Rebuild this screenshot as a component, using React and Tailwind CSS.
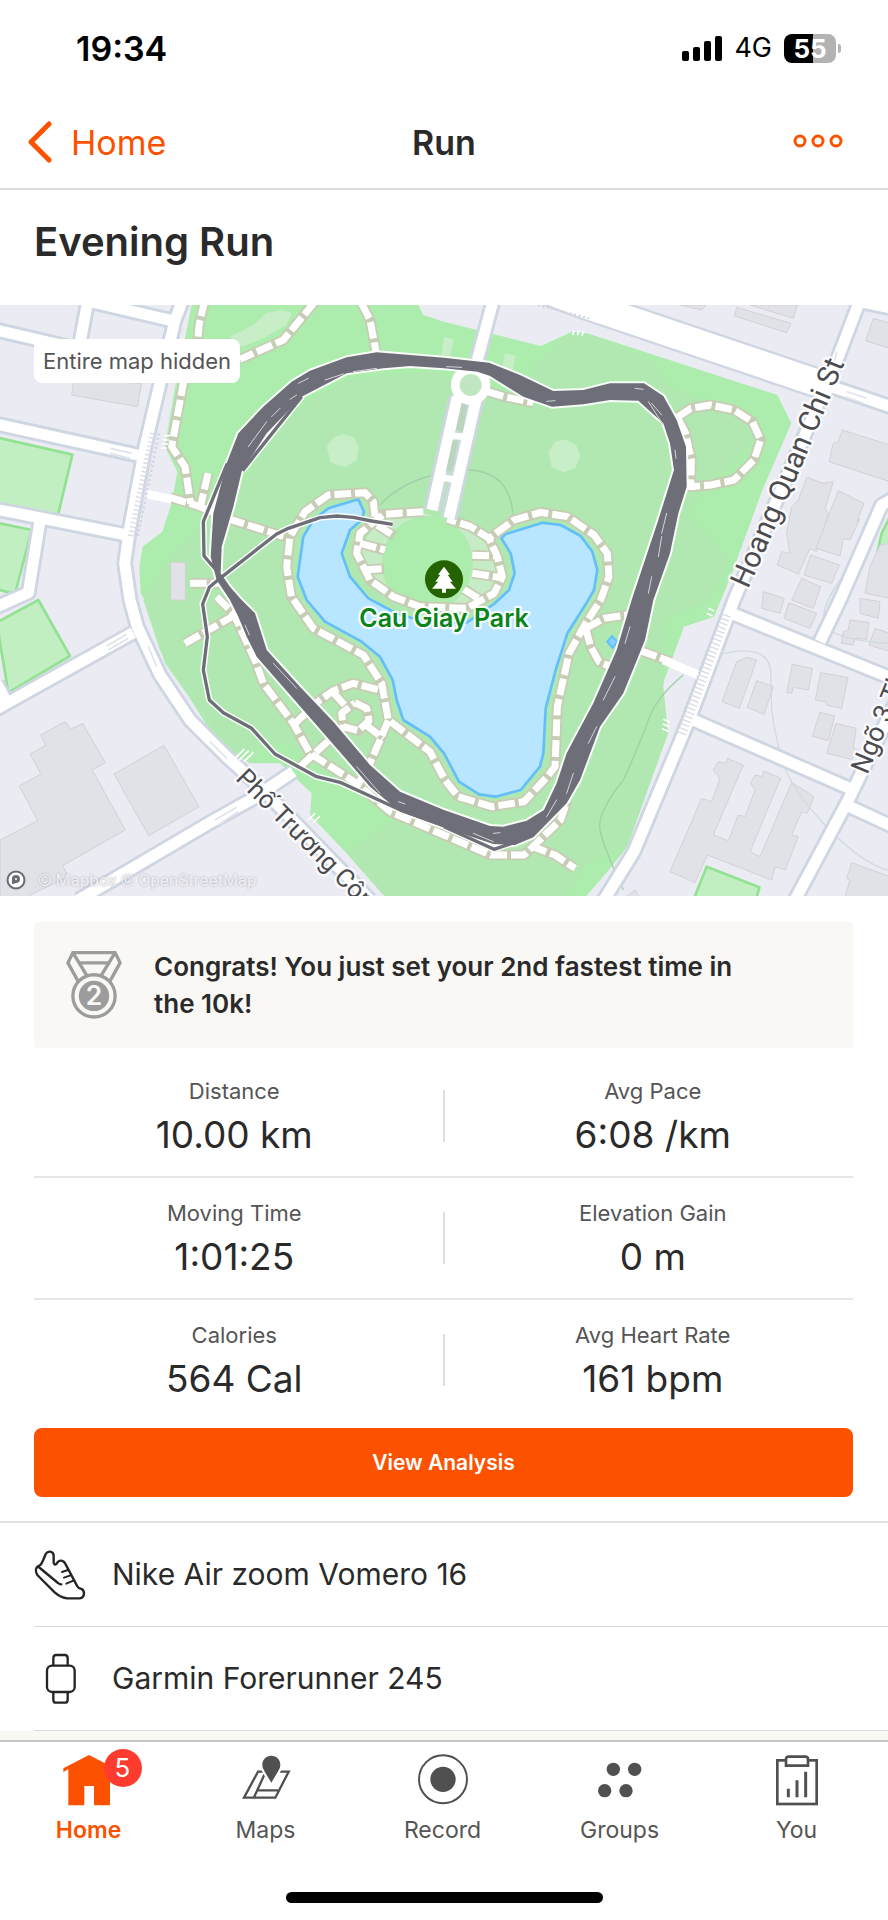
import React from 'react';

const stats = [
  [
    { label: 'Distance', value: '10.00 km' },
    { label: 'Avg Pace', value: '6:08 /km' },
  ],
  [
    { label: 'Moving Time', value: '1:01:25' },
    { label: 'Elevation Gain', value: '0 m' },
  ],
  [
    { label: 'Calories', value: '564 Cal' },
    { label: 'Avg Heart Rate', value: '161 bpm' },
  ],
];

/* ---------- map data (map units, 3 per px) ---------- */

const PARK =
  'M575 15 L520 290 L495 440 L532 515 L515 610 L487 695 L428 740 L418 800 L422 880 L440 910 L465 1000 L495 1090 L560 1180 L620 1275 L700 1360 L750 1390 L840 1390 L935 1480 L930 1545 L1040 1660 L1155 1790 L1757 1790 L1822 1715 L1882 1640 L2004 1300 L1987 1155 L2052 980 L2142 950 L2192 830 L2287 570 L2374 370 L2332 285 L1762 100 L1717 95 L1622 138 L1332 65 L1270 45 L1255 15 Z';

const PARK_INNER =
  'M720 560 L860 350 L1030 240 L1300 215 L1590 330 L1600 200 L1720 98 L1770 105 L1960 180 L2010 260 L2200 340 L2280 400 L2180 500 L2060 640 L2190 780 L2130 900 L2000 960 L1990 1160 L2004 1300 L1880 1640 L1760 1690 L1700 1790 L1155 1790 L1040 1660 L1180 1560 L860 1330 L700 1360 L560 1180 L480 1050 L430 900 L520 760 Z';

const LAKE =
  'M985 625 L1075 598 L1092 635 L1085 660 L1050 690 L1025 760 L1050 830 L1105 895 L1190 940 L1280 968 L1400 968 L1482 912 L1527 870 L1544 820 L1532 760 L1504 715 L1517 702 L1627 668 L1682 675 L1742 708 L1777 755 L1792 810 L1782 870 L1762 905 L1702 1000 L1667 1110 L1637 1225 L1630 1360 L1620 1400 L1562 1470 L1487 1490 L1437 1483 L1377 1445 L1332 1360 L1290 1310 L1210 1260 L1190 1200 L1178 1140 L1140 1070 L1085 1025 L975 965 L920 900 L893 830 L910 710 L940 660 Z';

const roads = [
  'M548 0 L525 60 L435 440 L388 690 L374 790 L390 900 L412 980 L480 1125 L570 1260 L680 1370 L790 1470 L1110 1800',
  'M-20 88 L480 205',
  'M250 0 L515 62',
  'M262 10 L238 140',
  'M-20 370 L425 468',
  'M-20 626 L395 708',
  'M120 662 L85 878 L-20 925',
  'M400 998 L-20 1232',
  'M-10 1150 L22 1210',
  'M880 1415 L760 1495 L640 1562 L235 1800',
  'M2580 0 L2515 170 L2202 900 L2067 1260 L1902 1655 L1812 1800',
  'M2202 943 L2700 1145',
  'M2460 1025 L2520 900 L2645 615 L2700 585',
  'M2075 1258 L2560 1470',
  'M2700 1180 L2545 1500 L2385 1800',
  'M2545 1518 L2700 1590',
  'M2480 255 L2700 330',
  'M1480 0 L1432 180',
  'M1372 290 L1296 630',
  'M1430 290 L1347 655',
  'M2580 5 L2700 30',
];

const paths = [
  'M615 0 L598 70 L592 130 L550 250 L515 440 L555 500 L572 612',
  'M945 5 L850 120 L720 178',
  'M1085 10 L1110 60 L1128 155',
  'M510 592 L600 620 L690 658 L860 712',
  'M624 520 L602 618',
  'M570 850 L660 850',
  'M1125 650 L1120 605 L1095 578 L985 585 L915 635 L870 710 L860 800 L874 890 L940 985 L1090 1065 L1145 1150 L1165 1260 L1290 1355 L1335 1440 L1375 1490 L1475 1520 L1572 1505 L1642 1430 L1665 1400 L1672 1220 L1707 1060 L1757 970 L1802 900 L1827 830 L1822 760 L1782 705 L1702 650 L1622 637 L1542 660 L1467 715 L1412 680 L1342 657',
  'M1270 635 L1150 643 L1080 700 L1070 760 L1110 840 L1180 890 L1260 920 L1400 925 L1482 880 L1507 830 L1492 770 L1467 715',
  'M1080 730 L1155 750',
  'M1095 810 L1152 806',
  'M1132 675 L1182 708',
  'M1417 766 L1482 768',
  'M1417 820 L1497 832',
  'M1392 868 L1442 900',
  'M2032 352 L2072 325 L2132 315 L2202 330 L2257 365 L2282 420 L2262 480 L2202 540 L2132 555 L2072 560 L2074 480 L2057 400 L2032 352',
  'M1462 275 L1512 290 L1600 308',
  'M1757 985 L1812 955 L1882 945',
  'M1757 985 L1772 1040 L1797 1085 L1832 1100',
  'M1922 1052 L2012 1085',
  'M650 890 L700 940 L765 1080 L790 1150 L880 1270 L930 1360 L1070 1450 L1170 1535 L1332 1605 L1472 1665 L1572 1665 L1682 1560 L1702 1500',
  'M1592 1638 L1665 1665 L1725 1705',
  'M555 1030 L700 948',
  'M1065 1208 L1100 1225 L1107 1262 L1075 1292 L1030 1280 L1025 1240 L1065 1208',
  'M880 1275 L960 1200 L1000 1172 L1060 1150 L1145 1172',
  'M1000 1178 L1040 1222',
  'M1098 1275 L1150 1315',
  'M1030 1282 L900 1400',
  'M1165 1262 L1110 1390 L1070 1460',
];

const buildings = [
  'M222 235 L425 250 L412 320 L215 285 Z',
  'M0 1620 L113 1562 L58 1458 L123 1422 L90 1362 L138 1336 L122 1305 L195 1265 L212 1288 L248 1270 L316 1388 L277 1410 L376 1590 L188 1697 L205 1730 L80 1790 L0 1790 Z',
  'M342 1422 L492 1336 L597 1520 L446 1607 Z',
  'M512 787 L556 787 L556 900 L512 900 Z',
  'M2210 22 L2372 70 L2360 98 L2204 48 Z',
  'M2250 15 L2392 15 L2380 55 Z',
  'M2040 15 L2118 15 L2105 30 Z',
  'M2620 55 L2670 70 L2670 145 L2597 122 Z',
  'M2527 390 L2670 435 L2670 545 L2487 485 L2500 430 L2515 425 Z',
  'M2420 532 L2470 550 L2500 545 L2475 625 L2485 640 L2450 755 L2430 745 L2395 822 L2332 795 L2345 755 L2370 760 L2360 700 L2375 620 L2395 600 Z',
  'M2515 572 L2592 610 L2570 665 L2580 655 L2550 720 L2530 715 L2520 768 L2448 745 Z',
  'M2432 765 L2518 795 L2495 850 L2412 825 Z',
  'M2405 835 L2462 860 L2440 925 L2375 900 Z',
  'M2640 735 L2670 730 L2670 895 L2595 880 L2610 800 Z',
  'M2290 875 L2352 895 L2340 940 L2285 925 Z',
  'M2367 908 L2450 940 L2430 985 L2352 955 Z',
  'M2580 895 L2640 905 L2635 955 L2580 940 Z',
  'M2550 960 L2607 968 L2600 1018 L2565 1015 L2560 1035 L2524 1030 L2530 995 L2545 990 Z',
  'M2625 985 L2670 1000 L2670 1055 L2607 1035 Z',
  'M2240 1072 L2270 1080 L2218 1225 L2166 1205 L2210 1085 Z',
  'M2270 1142 L2320 1160 L2292 1243 L2242 1222 Z',
  'M2377 1093 L2437 1105 L2425 1170 L2380 1162 L2375 1180 L2360 1178 Z',
  'M2462 1118 L2544 1133 L2525 1225 L2480 1215 L2477 1205 L2446 1200 Z',
  'M2460 1237 L2504 1248 L2485 1322 L2437 1308 Z',
  'M2508 1270 L2568 1285 L2560 1345 L2575 1350 L2555 1378 L2480 1360 Z',
  'M2182 1375 L2230 1395 L2140 1605 L2185 1622 L2215 1545 L2235 1550 L2265 1470 L2252 1450 L2265 1425 L2285 1430 L2292 1413 L2342 1435 L2250 1655 L2280 1670 L2375 1448 L2412 1470 L2442 1490 L2422 1540 L2405 1535 L2375 1605 L2395 1610 L2355 1710 L2325 1700 L2315 1740 L2122 1665 L2085 1748 L2010 1715 L2105 1495 L2135 1505 L2160 1435 L2140 1410 L2155 1385 L2178 1390 Z',
  'M2555 1688 L2670 1730 L2670 1790 L2535 1790 L2550 1740 L2540 1735 Z',
  'M1885 1785 L1905 1770 L1918 1790 L1880 1790 Z',
];

const pitches = [
  'M-10 412 L217 464 L174 645 L-10 612 Z',
  'M-10 668 L95 690 L45 882 L-10 868 Z',
  'M-10 968 L115 900 L210 1068 L25 1178 Z',
  'M2120 1700 L2278 1762 L2268 1800 L2080 1800 Z',
  'M2670 650 L2645 700 L2632 758 L2670 758 Z',
];

const footways = [
  'M1140 615 Q1200 550 1300 525',
  'M1400 510 Q1530 510 1540 650',
  'M2050 1125 Q1970 1190 1945 1260 T1870 1440 Q1790 1540 1800 1590 Q1810 1640 1870 1770',
];

const alleys = [
  'M2165 1062 Q2300 1030 2312 1110 L2315 1230 Q2325 1310 2350 1390 T2480 1580 T2664 1710',
  'M2520 840 Q2450 940 2480 980 T2664 1030',
];

const BAND =
  'M650 840 L632 770 L640 640 L680 490 L715 400 L790 320 L875 245 L930 212 L1040 172 L1130 157 L1332 173 L1467 188 L1560 225 L1660 273 L1750 270 L1830 250 L1932 250 L1990 288 L2030 360 L2058 440 L2060 560 L2035 640 L2010 760 L1960 900 L1935 1020 L1870 1180 L1800 1280 L1740 1440 L1700 1510 L1600 1612 L1545 1635 L1480 1632 L1332 1583 L1200 1535 L1110 1460 L980 1310 L770 1070 L740 1010 L715 950 L690 900 Z ' +
  'M662 820 L690 860 L720 895 L765 940 L800 1050 L900 1160 L1000 1265 L1110 1395 L1200 1475 L1332 1530 L1470 1578 L1510 1580 L1580 1562 L1632 1530 L1670 1450 L1700 1360 L1780 1210 L1850 1050 L1895 900 L1925 810 L1975 660 L2022 510 L2010 430 L1990 370 L1915 302 L1830 300 L1750 313 L1656 320 L1570 290 L1470 228 L1432 215 L1332 205 L1230 198 L1150 205 L1040 220 L905 290 L800 400 L725 515 L700 620 L665 740 Z';

const thinTracks = [
  'M1178 673 L1115 663 L1060 652 L1010 648 L960 653 L865 685 L830 702 L660 835 L628 862 L608 912 L622 1010 L610 1110 L628 1200 L670 1238 L755 1285 L825 1362 L950 1430 L1020 1447 L1190 1525 L1300 1565',
  'M682 490 L610 665 L612 768 L650 812',
  'M905 290 L770 458 L728 512',
  'M1332 1580 L1482 1648 L1560 1622',
];

const glints = [
  'M895 250 L925 235', 'M975 240 L1030 222', 'M1060 215 L1130 205', 'M870 298 L890 285',
  'M815 350 L840 325', 'M745 440 L800 365', 'M1340 200 L1385 202',
  'M1640 304 L1665 302', 'M1905 265 L1930 268', 'M1945 305 L1990 375',
  'M1955 310 L1985 345', 'M2025 450 L2028 475', 'M1985 700 L2000 640', 'M1975 770 L1985 710',
  'M1945 880 L1955 830', 'M1875 1030 L1890 980', 'M1810 1200 L1845 1130',
  'M1765 1330 L1790 1280', 'M1700 1480 L1720 1420', 'M1640 1550 L1670 1500',
  'M1480 1600 L1500 1598', 'M1420 1600 L1480 1625', 'M1195 1505 L1215 1512', 'M1070 1400 L1140 1480',
  'M820 1090 L890 1165', 'M735 975 L748 1005',
];

const crossings = [
  'M462 400 L395 715', 'M2180 945 L2045 1305',
];

const Lines = ({ items, ...rest }) => (
  <g fill="none" strokeLinejoin="round" {...rest}>
    {items.map((d) => (
      <path key={d} d={d} />
    ))}
  </g>
);

const ParkMap = () => (
  <svg
    viewBox="0 15 2664 1773"
    preserveAspectRatio="xMidYMid slice"
    className="block h-full w-full"
    role="img"
    aria-label="Map of the run around Cau Giay Park"
  >
    <rect y="15" width="2664" height="1773" fill="#ebebf4" />
    <path d={PARK} fill="#acecac" />
    <path d={PARK_INNER} fill="#b1e8b1" />
    <path d="M690 110 L760 75 L800 38 L850 30 L875 40 L860 75 L790 115 L725 140 Z" fill="#c8eec8" />
    <path d="M980 440 L1000 412 L1030 402 L1062 412 L1076 440 L1070 480 L1035 502 L992 488 Z" fill="#c8eec8" />
    <path d="M1645 455 L1665 425 L1695 418 L1728 435 L1742 468 L1725 505 L1690 517 L1655 500 Z" fill="#c8eec8" />
    <path d="M1515 160 L1547 168 L1537 215 L1508 195 Z M1332 110 L1362 118 L1350 170 L1325 165 Z" fill="#c8eec8" />
    <Lines items={pitches} fill="#c1efc1" stroke="#92e292" strokeWidth="8" />
    <Lines items={buildings} fill="#e1e2e8" stroke="#d3d1d4" strokeWidth="3" />
    <Lines items={footways} stroke="#a0d0a8" strokeWidth="4" />
    <Lines items={alleys} stroke="#cfdbde" strokeWidth="4" />

    {/* amphitheatre and lake */}
    <path d={LAKE} fill="#b8e5ff" stroke="#62bffb" strokeWidth="8" strokeLinejoin="round" />
    <path d="M1140 655 L1270 640 L1380 670 L1470 715 L1505 830 L1470 890 L1400 930 L1260 925 L1110 840 L1075 750 Z" fill="#c6ecc6" />
    <ellipse cx="1282" cy="790" rx="136" ry="142" fill="#acecac" />
    <path d="M1822 1025 L1836 1008 L1852 1025 L1838 1044 Z" fill="#8ad0ff" stroke="#62bffb" strokeWidth="6" />

    <Lines items={paths} stroke="#c6cdb4" strokeWidth="32" />
    <Lines items={paths} stroke="#fff" strokeWidth="21" strokeDasharray="50 12" />

    {/* streets */}
    <Lines items={roads} stroke="#ced6e2" strokeWidth="50" />
    <path d="M1600 -45 L1752 13 L2440 245 L2500 260" fill="none" stroke="#ced6e2" strokeWidth="94" />
    <Lines items={roads} stroke="#fff" strokeWidth="33" />
    <path d="M1600 -45 L1752 13 L2440 245 L2500 260" fill="none" stroke="#fff" strokeWidth="80" />
    <path d="M440 582 L515 598 M1990 1080 L2095 1125" stroke="#fff" strokeWidth="26" />
    <path d="M1385 312 L1402 316 L1388 395 L1368 390 Z M1358 420 L1374 424 L1356 515 L1338 512 Z" fill="#b9d5bd" />
    <path d="M1345 405 L1400 412 M1330 533 L1370 540" stroke="#fff" strokeWidth="20" />
    <circle cx="1412" cy="255" r="46" fill="#bfe6c0" stroke="#fff" strokeWidth="26" />
    <Lines items={crossings} stroke="#d8dbe6" strokeWidth="26" strokeDasharray="4 9" />
    <path d="M478 400 L412 715 M2165 945 L2030 1290 M1600 12 L1768 55" stroke="#ced3e0" strokeWidth="6" strokeDasharray="6 8" fill="none" />
    <path d="M332 445 L395 460 M330 460 L390 475 M325 1050 L385 1015 M320 1038 L380 1003 M445 1040 L470 1100 M630 1325 L680 1375 M645 1560 L710 1522 M655 1575 L715 1535 M2540 275 L2600 295 M2535 290 L2590 310 M2510 155 L2500 205" stroke="#e1e3ec" strokeWidth="5" />
    <path d="M492 407 h18 M489 420 h18 M486 432 h18 M483 444 h18 M1722 92 l-4 14 M1736 92 l-4 14 M1750 94 l-4 14 M705 1375 l28 -28 M718 1380 l28 -28 M732 1385 l28 -28 M925 1560 l20 -20 M940 1568 l20 -20 M2125 925 l18 8 M2120 940 l18 8 M1990 1258 l20 8 M1988 1272 l20 8 M1986 1286 l20 8" stroke="#fff" strokeWidth="5" />

    {/* recorded laps */}
    <path d={BAND} fill="none" stroke="#fff" strokeOpacity="0.9" strokeWidth="12" strokeLinejoin="round" />
    <Lines items={thinTracks} stroke="#fff" strokeOpacity="0.9" strokeWidth="19" />
    <path d={BAND} fill="#6e6e79" fillRule="evenodd" />
    <Lines items={thinTracks} stroke="#6e6e79" strokeWidth="10" />
    <Lines items={glints} stroke="#d4d4da" strokeWidth="3" strokeLinecap="round" />

    {/* place marker */}
    <circle cx="1332" cy="838" r="57" fill="#256300" />
    <path
      d="M1332 800 L1350 824 L1343 824 L1358 845 L1350 845 L1368 866 L1338 866 L1338 878 L1326 878 L1326 866 L1296 866 L1314 845 L1306 845 L1321 824 L1314 824 Z"
      fill="#fff"
    />

    <defs>
      <path id="street-hoang" d="M2244 868 Q2400 520 2574 90" />
      <path id="street-pho" d="M704 1438 L1150 1888" />
      <path id="street-ngo" d="M2602 1426 L2762 1040" />
    </defs>
    <g stroke="#fff" strokeOpacity="0.85" strokeWidth="14" strokeLinejoin="round" className="[paint-order:stroke] font-[Roboto,sans-serif]">
      <text fill="#4b4b50" className="text-[88px]">
        <textPath href="#street-hoang">Hoang Quan Chi St</textPath>
      </text>
      <text fill="#4b4b50" className="text-[77px]">
        <textPath href="#street-pho">Phố Trương Công</textPath>
      </text>
      <text fill="#4b4b50" className="text-[80px]">
        <textPath href="#street-ngo">Ngõ 3 Th</textPath>
      </text>
      <text x="1332" y="982" textAnchor="middle" fill="#0b8316" className="font-[Inter,sans-serif] text-[75px] font-semibold">
        Cau Giay Park
      </text>
    </g>
  </svg>
);

/* ---------- icons ---------- */

const SignalIcon = () => (
  <svg viewBox="0 0 40 25" className="h-[25px] w-[40px]" aria-hidden="true">
    <rect x="0" y="15" width="7" height="10" rx="2" />
    <rect x="11" y="11" width="7" height="14" rx="2" />
    <rect x="22" y="5" width="7" height="20" rx="2" />
    <rect x="33" y="0" width="7" height="25" rx="2" />
  </svg>
);

const MedalIcon = () => (
  <svg viewBox="0 0 168 206" className="h-[68px] w-[56px] shrink-0" fill="none" stroke="#9c9c9c" strokeWidth="10" aria-hidden="true">
    <path d="M36 92 L5 36 L20 5 H148 L163 36 L132 92" />
    <path d="M20 5 L62 74 M148 5 L106 74 M42 36 H126" />
    <circle cx="84" cy="136" r="64" />
    <circle cx="84" cy="136" r="46" fill="#9c9c9c" stroke="none" />
    <text x="84" y="165" textAnchor="middle" fill="#faf8f5" stroke="none" className="font-[Inter,sans-serif] text-[80px] font-semibold">
      2
    </text>
  </svg>
);

const ShoeIcon = () => (
  <svg viewBox="0 0 156 156" className="h-[52px] w-[52px]" fill="none" stroke="#242424" strokeWidth="7" strokeLinejoin="round" strokeLinecap="round" aria-hidden="true">
    <path d="M19 48 Q24 44 35 15 Q40 7 49 8 Q59 10 59 20 V42 Q62 50 68 44 Q73 34 82 35 Q90 36 95 46 L130 112 Q133 118 140 119 Q150 122 150 133 Q149 146 138 148 H100 Q80 146 62 130 L10 78 Q4 70 6 60 Q9 51 19 48 Z" />
    <path d="M14 54 L72 102 Q76 106 82 106" />
    <path d="M84 69 L102 63 M90 86 L110 79 M97 104 L118 95" strokeWidth="6" />
  </svg>
);

const WatchIcon = () => (
  <svg viewBox="0 0 156 156" className="h-[52px] w-[52px]" fill="none" stroke="#242424" strokeWidth="7" aria-hidden="true">
    <rect x="39" y="38" width="83" height="79" rx="15" />
    <path d="M58 38 V16 Q58 6 66 6 H92 Q101 6 101 16 V38 M58 117 V140 Q58 149 66 149 H92 Q101 149 101 140 V117" />
  </svg>
);

const HomeIcon = () => (
  <path d="M1 43 L78 3 L155 43 L155 51 L141 45 V154 H93 V96 H64 V154 H16 V46 L1 54 Z" fill="#fc5200" />
);

const MapsIcon = () => (
  <g fill="none" stroke="#505050" strokeWidth="7">
    <path d="M54 53 H146 L106 131 H12 Z M74 60 L42 130 M52 109 H116" />
    <path d="M94 5 C78 5 67 17 67 32 C67 44 74 52 94 86 C114 52 121 44 121 32 C121 17 110 5 94 5 Z" fill="#505050" stroke="#fff" strokeWidth="14" className="[paint-order:stroke]" />
  </g>
);

const RecordIcon = () => (
  <g>
    <circle cx="78" cy="76" r="72" fill="none" stroke="#505050" strokeWidth="6" />
    <circle cx="78" cy="76" r="38" fill="#505050" />
  </g>
);

const GroupsIcon = () => (
  <g fill="#505050">
    <circle cx="58" cy="46" r="20" />
    <circle cx="122" cy="46" r="20" />
    <circle cx="32" cy="110" r="20" />
    <circle cx="96" cy="110" r="20" />
  </g>
);

const YouIcon = () => (
  <g fill="none" stroke="#505050" strokeWidth="8">
    <rect x="19" y="19" width="118" height="131" />
    <path d="M45 35 V16 Q45 8 53 8 H103 Q111 8 111 16 V35 Z" fill="#fff" />
    <path d="M52 104 V130 M78 79 V130 M104 53 V130" strokeWidth="9" />
  </g>
);

const tabs = [
  { name: 'Home', Icon: HomeIcon, active: true, badge: 5 },
  { name: 'Maps', Icon: MapsIcon },
  { name: 'Record', Icon: RecordIcon },
  { name: 'Groups', Icon: GroupsIcon },
  { name: 'You', Icon: YouIcon },
];

/* ---------- sections ---------- */

const StatusBar = () => (
  <div className="flex h-24 items-center justify-between pr-[47px] pl-[76px] text-black">
    <span className="text-[34px] font-semibold">19:34</span>
    <div className="flex items-center">
      <SignalIcon />
      <span className="ml-3 text-[27px]">4G</span>
      <div className="ml-3 flex items-center gap-[2px]">
        <div className="flex h-[29px] w-[52px] items-center justify-center rounded-lg bg-linear-to-r from-black from-55% to-[#b3b3b3] to-55% text-[26px] font-bold text-white">
          55
        </div>
        <div className="h-[9px] w-[3px] rounded-r-full bg-[#b3b3b3]" />
      </div>
    </div>
  </div>
);

const Header = () => (
  <header className="grid h-[94px] grid-cols-3 items-center border-b-2 border-[#dedede] px-7">
    <a href="#home" className="flex items-center gap-[19px] text-[34px] text-[#fc5200]">
      <svg viewBox="0 0 24 42" className="h-[42px] w-6" fill="none" stroke="currentColor" strokeWidth="5" strokeLinecap="round" strokeLinejoin="round" aria-hidden="true">
        <path d="M21 3 L3 21 L21 39" />
      </svg>
      Home
    </a>
    <h1 className="text-center text-[34px] font-semibold">Run</h1>
    <button type="button" aria-label="More options" className="justify-self-end pr-4">
      <svg viewBox="0 0 52 16" className="h-4 w-[52px]" fill="none" stroke="#fc5200" strokeWidth="3">
        <circle cx="8" cy="7" r="5" />
        <circle cx="26" cy="7" r="5" />
        <circle cx="44" cy="7" r="5" />
      </svg>
    </button>
  </header>
);

const Stat = ({ label, value }) => (
  <div className="pt-5 pb-[19px] text-center">
    <dt className="text-[22px] leading-[30px] text-[#555]">{label}</dt>
    <dd className="mt-[7px] text-[37px] leading-[44px]">{value}</dd>
  </div>
);

const GearRow = ({ icon, children }) => (
  <li className="flex h-[104px] items-center gap-[26px] border-b border-[#d9d9d9] text-[30px]">
    {icon}
    {children}
  </li>
);

const TabBar = () => (
  <nav className="border-t-2 border-[#c6c6c6] bg-white pt-3">
    <div className="grid grid-cols-5 pr-[3px]">
      {tabs.map(({ name, Icon, active, badge }) => (
        <a
          key={name}
          href={`#${name.toLowerCase()}`}
          className={`flex flex-col items-center gap-2 text-[23px] leading-8 ${active ? 'font-semibold text-[#fc5200]' : 'text-[#555]'}`}
        >
          <span className="relative">
            <svg viewBox="0 0 156 156" className="h-[52px] w-[52px]" aria-hidden="true">
              <Icon />
            </svg>
            {badge && (
              <span className="absolute -top-[5px] left-[41px] flex h-[38px] w-[38px] items-center justify-center rounded-full bg-[#ff3b30] text-[26px] font-normal text-white">
                {badge}
              </span>
            )}
          </span>
          {name}
        </a>
      ))}
    </div>
    <div className="mx-auto mt-[46px] mb-[17px] h-[11px] w-[317px] rounded-full bg-black" />
  </nav>
);

const App = () => (
  <div className="flex min-h-screen flex-col bg-white font-[Inter,sans-serif] text-[#2a2a2a]">
    <StatusBar />
    <Header />

    <main className="flex-1 bg-[#f9f8f5]">
      <div className="bg-white">
        <h2 className="px-[34px] pt-7 pb-[39px] text-[40px] leading-[48px] font-semibold">Evening Run</h2>

        <div className="relative aspect-[888/591] w-full overflow-hidden">
          <ParkMap />
          <span className="absolute top-[34px] left-[34px] flex h-11 items-center rounded-lg bg-white px-[9px] text-[22px] text-[#555]">
            Entire map hidden
          </span>
          <div className="absolute bottom-[3px] left-[6px] flex items-center gap-3 font-[Roboto,sans-serif] text-[17px] text-white/80 [text-shadow:0_0_2px_#9a9aa8]">
            <svg viewBox="0 0 20 20" className="h-5 w-5" fill="none" stroke="#6b6b78" strokeWidth="2" aria-hidden="true">
              <circle cx="10" cy="10" r="8.5" fill="#fff" />
              <path d="M6 14 V9 A4 4 0 1 1 10 13 Q8 14 6 14 Z" fill="#6b6b78" stroke="none" />
              <circle cx="10" cy="9" r="1" fill="#fff" stroke="none" />
            </svg>
            © Mapbox © OpenStreetMap
          </div>
        </div>

        <div className="pt-[26px] pr-[35px] pb-6 pl-[34px]">
          <div className="flex items-center gap-8 rounded-sm bg-[#f9f8f5] py-[26px] pr-24 pl-8">
            <MedalIcon />
            <p className="text-[26px] leading-[37px] font-semibold">
              Congrats! You just set your 2nd fastest time in the 10k!
            </p>
          </div>

          <div className="my-2 divide-y-2 divide-[#e6e6ea]">
            {stats.map(([left, right]) => (
              <dl key={left.label} className="grid grid-cols-[1fr_2px_1fr] gap-x-2">
                <Stat {...left} />
                <div className="h-[52px] self-center bg-[#dedede]" aria-hidden="true" />
                <Stat {...right} />
              </dl>
            ))}
          </div>

          <button type="button" className="h-[69px] w-full rounded-lg bg-[#fc5200] text-[21px] font-semibold text-white">
            View Analysis
          </button>
        </div>

        <ul className="border-t-2 border-[#e3e3e3] pl-[34px]">
          <GearRow icon={<ShoeIcon />}>Nike Air zoom Vomero 16</GearRow>
          <GearRow icon={<WatchIcon />}>Garmin Forerunner 245</GearRow>
        </ul>
      </div>
    </main>

    <TabBar />
  </div>
);

export default App;
